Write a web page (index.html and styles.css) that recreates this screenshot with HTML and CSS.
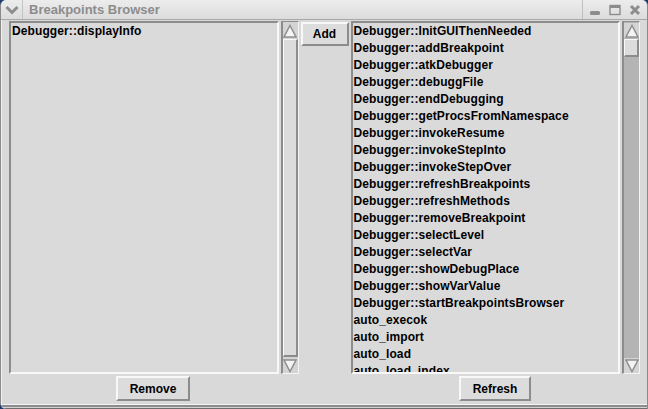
FILE: index.html
```html
<!DOCTYPE html>
<html>
<head>
<meta charset="utf-8">
<link rel="stylesheet" href="styles.css">
</head>
<body>
<div class="window">
  <div class="titlebar">
    <div class="tb-menu">
      <svg width="14" height="10" viewBox="0 0 14 10"><path d="M1.5 2 L7 7.5 L12.5 2" fill="none" stroke="#8c8c8c" stroke-width="3"/></svg>
    </div>
    <div class="tb-title">Breakpoints Browser</div>
    <div class="tb-controls">
      <svg width="12" height="12" viewBox="0 0 12 12"><rect x="1" y="7" width="10" height="4" rx="1.5" fill="#8c8c8c"/></svg>
      <svg width="12" height="12" viewBox="0 0 12 12"><rect x="1" y="1.5" width="10" height="9" fill="none" stroke="#8c8c8c" stroke-width="1.4"/><rect x="1" y="1" width="10" height="3" fill="#8c8c8c"/></svg>
      <svg width="12" height="12" viewBox="0 0 12 12"><path d="M2 2 L10 10 M10 2 L2 10" stroke="#8c8c8c" stroke-width="3"/></svg>
    </div>
  </div>
  <div class="content">
    <div class="main">
      <div class="list list-left">
        <div class="item">Debugger::displayInfo</div>
      </div>
      <div class="scrollbar">
        <div class="arrow">
          <svg width="14" height="14" viewBox="0 0 14 14"><path d="M7 1.5 L13 13 L1 13 Z" fill="#f4f4f4" stroke="#8e8e8e" stroke-width="1.5"/></svg>
        </div>
        <div class="trough">
          <div class="slider slider-full"></div>
        </div>
        <div class="arrow">
          <svg width="14" height="14" viewBox="0 0 14 14"><path d="M1 1 L13 1 L7 12.5 Z" fill="#f4f4f4" stroke="#8e8e8e" stroke-width="1.5"/></svg>
        </div>
      </div>
      <div class="addcol">
        <button class="btn btn-add">Add</button>
      </div>
      <div class="list list-right">
        <div class="item">Debugger::InitGUIThenNeeded</div>
        <div class="item">Debugger::addBreakpoint</div>
        <div class="item">Debugger::atkDebugger</div>
        <div class="item">Debugger::debuggFile</div>
        <div class="item">Debugger::endDebugging</div>
        <div class="item">Debugger::getProcsFromNamespace</div>
        <div class="item">Debugger::invokeResume</div>
        <div class="item">Debugger::invokeStepInto</div>
        <div class="item">Debugger::invokeStepOver</div>
        <div class="item">Debugger::refreshBreakpoints</div>
        <div class="item">Debugger::refreshMethods</div>
        <div class="item">Debugger::removeBreakpoint</div>
        <div class="item">Debugger::selectLevel</div>
        <div class="item">Debugger::selectVar</div>
        <div class="item">Debugger::showDebugPlace</div>
        <div class="item">Debugger::showVarValue</div>
        <div class="item">Debugger::startBreakpointsBrowser</div>
        <div class="item">auto_execok</div>
        <div class="item">auto_import</div>
        <div class="item">auto_load</div>
        <div class="item">auto_load_index</div>
      </div>
      <div class="scrollbar scrollbar-dark">
        <div class="arrow">
          <svg width="14" height="14" viewBox="0 0 14 14"><path d="M7 1.5 L13 13 L1 13 Z" fill="#f4f4f4" stroke="#8e8e8e" stroke-width="1.5"/></svg>
        </div>
        <div class="trough">
          <div class="slider slider-small"></div>
        </div>
        <div class="arrow">
          <svg width="14" height="14" viewBox="0 0 14 14"><path d="M1 1 L13 1 L7 12.5 Z" fill="#f4f4f4" stroke="#8e8e8e" stroke-width="1.5"/></svg>
        </div>
      </div>
    </div>
    <div class="bottom">
      <button class="btn btn-remove">Remove</button>
      <button class="btn btn-refresh">Refresh</button>
    </div>
  </div>
  <div class="frame-bottom"></div>
</div>
</body>
</html>
```
FILE: styles.css
```css
html, body {
  margin: 0;
  padding: 0;
  background: #1f3c6e;
}
body {
  width: 648px;
  height: 409px;
  overflow: hidden;
  font-family: "Liberation Sans", Arial, sans-serif;
}
.window {
  width: 648px;
  height: 409px;
  box-sizing: border-box;
  background: #d9d9d9;
  border-left: 1px solid #8a8a8a;
  border-right: 1px solid #8a8a8a;
  border-radius: 6px 6px 0 6px;
  display: flex;
  flex-direction: column;
  overflow: hidden;
}
.titlebar {
  height: 19px;
  flex: none;
  display: flex;
  align-items: stretch;
  background: linear-gradient(#ececec, #dcdcdc);
  border-bottom: 1px solid #a8a8a8;
}
.tb-menu {
  width: 21px;
  display: flex;
  align-items: center;
  justify-content: center;
  border-right: 1px solid #c4c4c4;
}
.tb-title {
  flex: 1;
  padding-left: 6px;
  font-weight: bold;
  font-size: 13px;
  line-height: 19px;
  color: #8c8c8c;
  border-right: 1px solid #c0c0c0;
}
.tb-controls {
  width: 60px;
  display: flex;
  align-items: center;
  justify-content: space-around;
  padding: 0 2px;
}
.content {
  flex: none;
  display: flex;
  flex-direction: column;
  padding: 1px 7px 0 6px;
  border-left: 1px solid #f2f2f2;
}
.main {
  height: 353px;
  display: flex;
  gap: 2px;
}
.list {
  box-sizing: border-box;
  height: 353px;
  background: #dadada;
  border-top: 2px solid #8c8c8c;
  border-left: 2px solid #8c8c8c;
  border-bottom: 2px solid #f8f8f8;
  border-right: 2px solid #f8f8f8;
  padding: 0 1px;
  overflow: hidden;
  font-size: 12px;
  font-weight: bold;
  color: #000;
  letter-spacing: 0.1px;
}
.list-left {
  width: 271px;
  margin-left: 1px;
}
.list-right {
  width: 271px;
}
.item {
  line-height: 17px;
  height: 17px;
  white-space: nowrap;
}
.scrollbar {
  box-sizing: border-box;
  width: 18px;
  height: 353px;
  display: flex;
  flex-direction: column;
  background: #d4d4d4;
  border-top: 1px solid #8c8c8c;
  border-left: 2px solid #8c8c8c;
  border-bottom: 1px solid #f4f4f4;
  border-right: 1px solid #f4f4f4;
  padding: 1px 0 0 0;
}
.scrollbar-dark {
  background: #b4b4b4;
}
.arrow {
  height: 15px;
  flex: none;
  display: flex;
  justify-content: center;
  align-items: center;
  background: #d4d4d4;
}
.trough {
  flex: 1;
  display: flex;
  flex-direction: column;
  padding: 1px 0;
}
.slider {
  box-sizing: border-box;
  background: #dcdcdc;
  border-top: 1px solid #f8f8f8;
  border-left: 1px solid #f8f8f8;
  border-bottom: 2px solid #8c8c8c;
  border-right: 2px solid #8c8c8c;
}
.slider-full {
  flex: 1;
}
.slider-small {
  height: 18px;
}
.addcol {
  width: 48px;
  display: flex;
  flex-direction: column;
  padding-top: 1px;
}
.btn {
  box-sizing: border-box;
  font-family: "Liberation Sans", Arial, sans-serif;
  font-weight: bold;
  font-size: 12px;
  line-height: 14px;
  color: #000;
  background: #dcdcdc;
  border-top: 2px solid #f8f8f8;
  border-left: 2px solid #f8f8f8;
  border-bottom: 2px solid #8c8c8c;
  border-right: 2px solid #8c8c8c;
  padding: 0;
  margin: 0;
}
.btn-add {
  width: 48px;
  height: 24px;
}
.bottom {
  display: flex;
  align-items: flex-start;
  height: 30px;
  padding-top: 2px;
  box-sizing: border-box;
}
.btn-remove {
  width: 74px;
  height: 25px;
  margin-left: 108px;
}
.btn-refresh {
  width: 72px;
  height: 25px;
  margin-left: 269px;
}
.frame-bottom {
  flex: 1;
  border-top: 1px solid #f4f4f4;
  background: #d2d2d2;
  box-shadow: inset 0 2px 0 #8c8c8c;
  border-bottom: 1px solid #6e6e6e;
}
```
